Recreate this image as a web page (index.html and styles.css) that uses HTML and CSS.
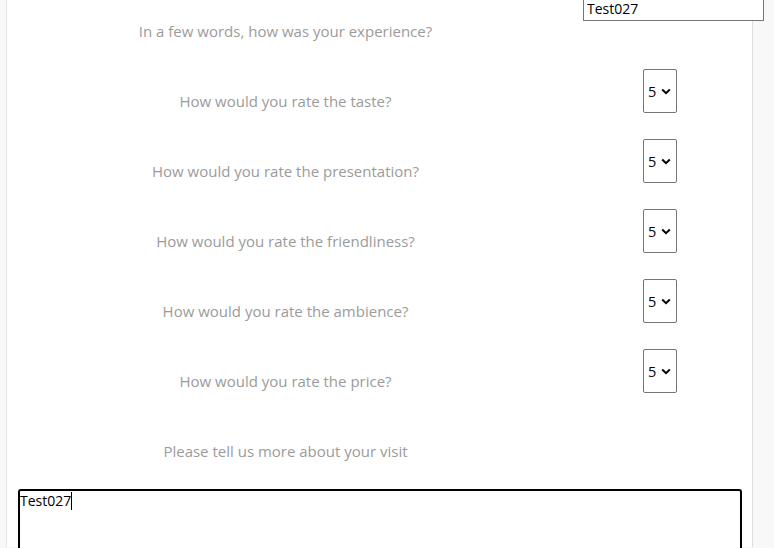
FILE: index.html
```html
<!DOCTYPE html>
<html>
<head>
<meta charset="utf-8">
<link rel="stylesheet" href="styles.css">
</head>
<body>
<div class="card">
  <div class="top">
    <input class="name" type="text" value="Test027">
  </div>
  <div class="row">
    <div class="label">In a few words, how was your experience?</div>
  </div>
  <div class="row">
    <div class="label">How would you rate the taste?</div>
    <div class="sel"><select><option>5</option></select><svg class="chev" width="10" height="7" viewBox="0 0 10 7"><path d="M1.2 1.5 L5 5.2 L8.8 1.5" fill="none" stroke="#000" stroke-width="2"/></svg></div>
  </div>
  <div class="row">
    <div class="label">How would you rate the presentation?</div>
    <div class="sel"><select><option>5</option></select><svg class="chev" width="10" height="7" viewBox="0 0 10 7"><path d="M1.2 1.5 L5 5.2 L8.8 1.5" fill="none" stroke="#000" stroke-width="2"/></svg></div>
  </div>
  <div class="row">
    <div class="label">How would you rate the friendliness?</div>
    <div class="sel"><select><option>5</option></select><svg class="chev" width="10" height="7" viewBox="0 0 10 7"><path d="M1.2 1.5 L5 5.2 L8.8 1.5" fill="none" stroke="#000" stroke-width="2"/></svg></div>
  </div>
  <div class="row">
    <div class="label">How would you rate the ambience?</div>
    <div class="sel"><select><option>5</option></select><svg class="chev" width="10" height="7" viewBox="0 0 10 7"><path d="M1.2 1.5 L5 5.2 L8.8 1.5" fill="none" stroke="#000" stroke-width="2"/></svg></div>
  </div>
  <div class="row">
    <div class="label">How would you rate the price?</div>
    <div class="sel"><select><option>5</option></select><svg class="chev" width="10" height="7" viewBox="0 0 10 7"><path d="M1.2 1.5 L5 5.2 L8.8 1.5" fill="none" stroke="#000" stroke-width="2"/></svg></div>
  </div>
  <div class="row">
    <div class="label">Please tell us more about your visit</div>
  </div>
  <div class="area-wrap">
    <textarea class="area">Test027</textarea>
    <span class="caret"></span>
  </div>
</div>
</body>
</html>
```
FILE: styles.css
```css
html, body {
  margin: 0;
  padding: 0;
  height: 100%;
  overflow: hidden;
}
body {
  background: #f8f8f8;
  font-family: "Open Sans", "Noto Sans", sans-serif;
}
.card {
  margin-left: 6px;
  width: 747px;
  height: 100%;
  background: #fff;
  border-left: 1px solid #e6e6e6;
  border-right: 1px solid #dcdcdc;
  box-sizing: border-box;
  position: relative;
}
.top {
  height: 0;
  position: relative;
}
.name {
  position: absolute;
  left: 576px;
  top: -3px;
  width: 181px;
  height: 25px;
  box-sizing: border-box;
  border: 1px solid #767676;
  border-radius: 0;
  padding: 0 3px;
  font-family: "Open Sans", sans-serif;
  font-size: 14px;
  color: #000;
  line-height: 23px;
  outline: none;
}
.row {
  display: flex;
  height: 70px;
  margin-top: -1px;
  margin-bottom: 1px;
}
.label {
  width: 535px;
  margin-left: 11px;
  padding-top: 20px;
  text-align: center;
  color: #9b9b9b;
  font-size: 15px;
  line-height: 24px;
}
.sel {
  position: relative;
  margin-left: 90px;
  width: 34px;
  height: 44px;
}
.sel select {
  appearance: none;
  -webkit-appearance: none;
  width: 34px;
  height: 44px;
  box-sizing: border-box;
  border: 1px solid #767676;
  border-radius: 2px;
  background: #fff;
  padding: 0 0 0 4px;
  font-family: "Open Sans", sans-serif;
  font-size: 14.5px;
  color: #000;
  outline: none;
}
.chev {
  position: absolute;
  left: 18px;
  top: 19px;
  pointer-events: none;
}
.area-wrap {
  position: relative;
  margin-left: 11px;
  margin-top: -1px;
}
.area {
  display: block;
  width: 724px;
  height: 62px;
  box-sizing: border-box;
  border: 2px solid #000;
  border-bottom: none;
  border-radius: 3px 3px 0 0;
  padding: 0;
  font-family: "Open Sans", sans-serif;
  font-size: 14px;
  line-height: 20px;
  color: #000;
  resize: none;
  outline: none;
}
.caret {
  position: absolute;
  left: 53px;
  top: 3px;
  width: 1px;
  height: 18px;
  background: #000;
}
```
